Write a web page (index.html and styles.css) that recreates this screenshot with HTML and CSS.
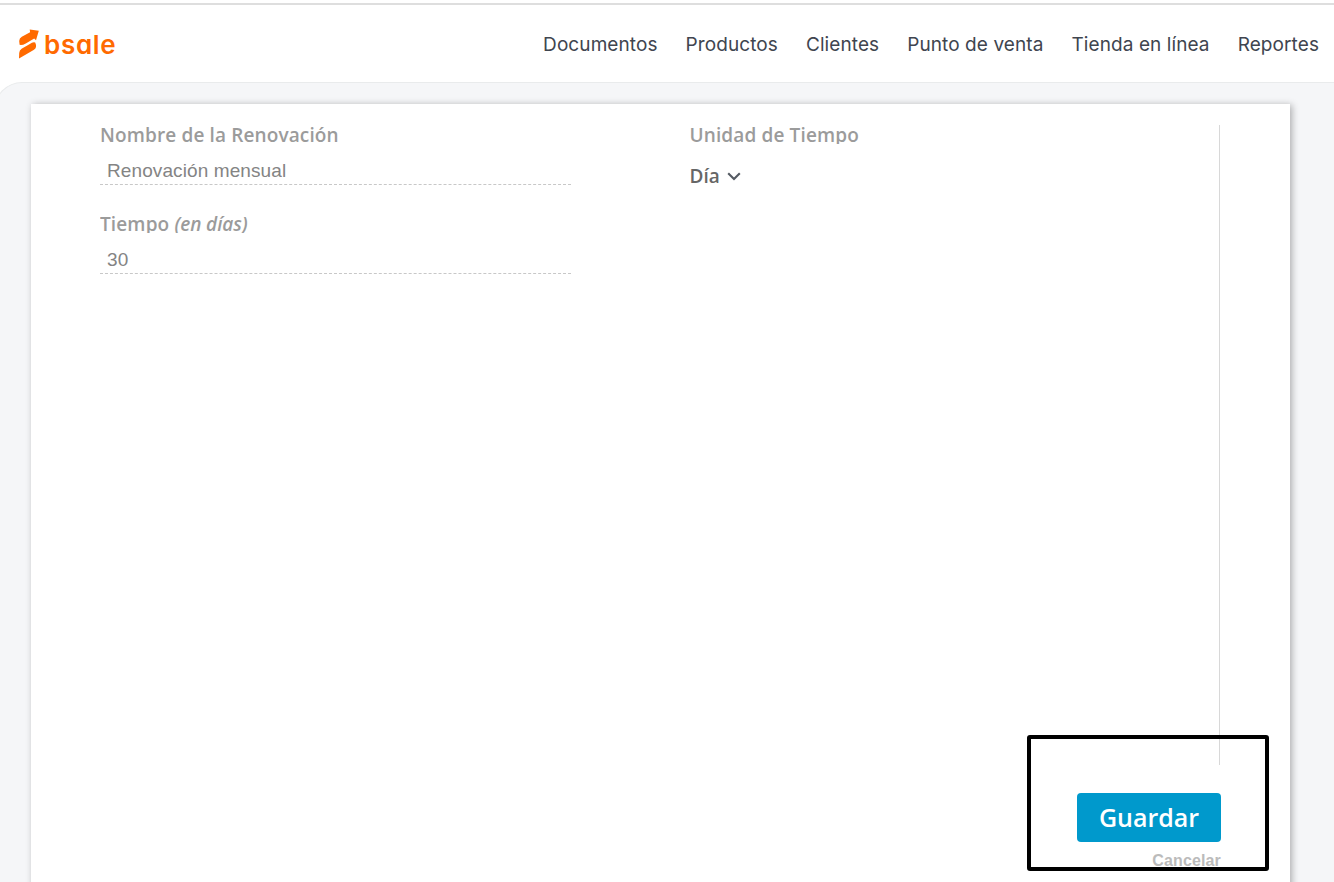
FILE: index.html
```html
<!DOCTYPE html>
<html lang="es">
<head>
    <meta charset="UTF-8">
    <meta name="viewport" content="width=device-width, initial-scale=1.0">
    <title>Bsale | Renovación</title>
    <link rel="stylesheet" href="styles.css">
</head>
<body>
    <header class="header">
        <a class="logo">
            <svg width="20" height="30" viewBox="0 0 20 30" fill="#ff6a00">
                <path d="M0.6 15.8 L0.2 12 Q0.3 9.2 2.8 7.8 L11.1 3.2 L10.7 0.4 L19.8 1.8 L17 11.2 L15.2 9.6 L6.8 14.4 Q3.2 16.4 0.6 15.8Z"/>
                <path d="M0 29.6 L0.2 24 Q0.4 21.2 2.6 19.8 L10.4 15.2 Q14 12.4 16.2 13.4 Q18.6 18.6 14.6 21 Z"/>
            </svg>
            <span class="brand">bsale</span>
        </a>
        <nav class="menu">
            <a>Documentos</a>
            <a>Productos</a>
            <a>Clientes</a>
            <a>Punto de venta</a>
            <a>Tienda en línea</a>
            <a>Reportes</a>
        </nav>
    </header>
    <main class="content">
        <div class="card">
            <form class="form">
                <div class="column">
                    <label class="label" for="nombre">Nombre de la Renovación</label>
                    <input class="input" type="text" id="nombre" value="Renovación mensual">
                    <label class="label" for="tiempo">Tiempo <em>(en días)</em></label>
                    <input class="input days" type="text" id="tiempo" value="30">
                </div>
                <div class="column">
                    <span class="label">Unidad de Tiempo</span>
                    <div class="select">
                        <span>Día</span>
                        <svg width="14" height="9" viewBox="0 0 14 9" fill="none" stroke="#555b63" stroke-width="2.1">
                            <path d="M1.2 1.2 L7 7 L12.8 1.2"/>
                        </svg>
                    </div>
                </div>
            </form>
            <div class="actions">
                <button class="save" type="button">Guardar</button>
                <a class="cancel">Cancelar</a>
            </div>
            <div class="highlight"></div>
        </div>
    </main>
</body>
</html>
```

FILE: styles.css
```css
*{
    margin:0;
    padding:0;
    box-sizing: border-box;
}
body{
    height:882px;
    overflow:hidden;
    background:#fff;
    padding-top:3px;
    display:flex;
    flex-direction:column;
}
.header{
    height:79px;
    flex:none;
    border-top:2px solid #dedede;
    display:flex;
    justify-content:space-between;
    padding:0 15px 0 19px;
}
.logo{
    display:flex;
    color:#ff6a00;
    padding-top:24px;
}
.brand{
    font:600 26px/31px "Inter", sans-serif;
    font-feature-settings:"cv11";
    letter-spacing:.7px;
    margin-left:5px;
}
.menu{
    display:flex;
    gap:28px;
    font:400 19px/24px "Inter", sans-serif;
    letter-spacing:.09px;
    color:#40454f;
    padding-top:28px;
    white-space:nowrap;
}
.content{
    flex:1;
    min-height:0;
    margin-left:-6px;
    padding:21px 44px 0 36px;
    background:#f5f6f8;
    border:1px solid #e9ebec;
    border-width:1px 0 0 1px;
    border-top-left-radius:28px;
}
.card{
    position:relative;
    height:800px;
    background:#fff;
    box-shadow:2px 1px 7px rgba(0,0,0,.3);
    padding:21px 70px 0 69px;
}
.form{
    display:flex;
    gap:118.5px;
    height:640px;
    border-right:1px solid #d8d8d8;
}
.column{
    display:flex;
    flex-direction:column;
    align-items:flex-start;
    width:471px;
}
.label{
    height:19px;
    overflow:hidden;
    font:600 19px/20px "Open Sans", sans-serif;
    letter-spacing:.13px;
    color:#9b9b9b;
}
.label em{
    letter-spacing:-.1px;
}
.input{
    width:471px;
    height:28px;
    margin:13px 0 29px;
    padding:0 7px;
    border:none;
    border-bottom:1px dashed #c8c8c8;
    outline:none;
    background:none;
    font:19px "Liberation Sans", sans-serif;
    letter-spacing:.1px;
    color:#848484;
}
.days{
    padding-top:1px;
}
.select{
    display:flex;
    align-items:center;
    gap:7px;
    margin-top:20px;
    font:600 19px/24px "Open Sans", sans-serif;
    color:#666;
}
.actions{
    display:flex;
    flex-direction:column;
    align-items:flex-end;
    margin:28px -1px 0 0;
}
.save{
    width:144px;
    height:49px;
    padding-bottom:2px;
    border:none;
    border-radius:4px;
    background:#09c;
    color:#fff;
    font:600 25px "Open Sans", sans-serif;
}
.cancel{
    margin-top:10px;
    font:bold 16px/18px "Liberation Sans", sans-serif;
    letter-spacing:.15px;
    color:#bbb;
}
.highlight{
    position:absolute;
    left:996px;
    top:631px;
    width:242px;
    height:136px;
    border:4px solid #000;
    border-radius:3px;
}
```
